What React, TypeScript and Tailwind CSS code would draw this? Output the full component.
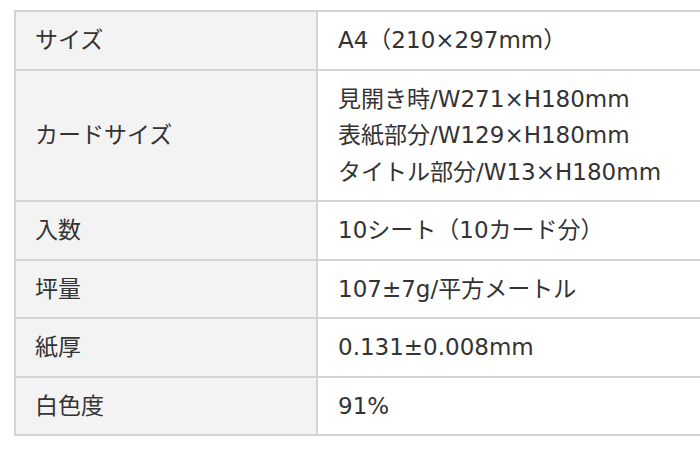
import React from 'react';

const rows: { label: string; values: string[] }[] = [
  { label: 'サイズ', values: ['A4（210×297mm）'] },
  {
    label: 'カードサイズ',
    values: ['見開き時/W271×H180mm', '表紙部分/W129×H180mm', 'タイトル部分/W13×H180mm'],
  },
  { label: '入数', values: ['10シート（10カード分）'] },
  { label: '坪量', values: ['107±7g/平方メートル'] },
  { label: '紙厚', values: ['0.131±0.008mm'] },
  { label: '白色度', values: ['91%'] },
];

export default function App() {
  return (
    <div
      className="w-[700px] h-[452px] bg-white pl-[14px] pt-[10px] overflow-hidden text-[#333333]"
      style={{ fontFamily: '"DejaVu Sans", "Noto Sans CJK JP", sans-serif' }}
    >
      <div className="border-t-2 border-l-2 border-[#d4d4d4]">
        {rows.map((row) => (
          <div key={row.label} className="flex border-b-2 border-[#d4d4d4]">
            <div className="w-[302px] shrink-0 bg-[#f3f3f3] border-r-2 border-[#d4d4d4] flex items-center pl-[19px] py-[10px] text-[23px] leading-[36.5px]">
              {row.label}
            </div>
            <div className="flex-1 pl-[20px] py-[10px] text-[23px] leading-[36.5px]">
              {row.values.map((v) => (
                <div key={v}>{v}</div>
              ))}
            </div>
          </div>
        ))}
      </div>
    </div>
  );
}
